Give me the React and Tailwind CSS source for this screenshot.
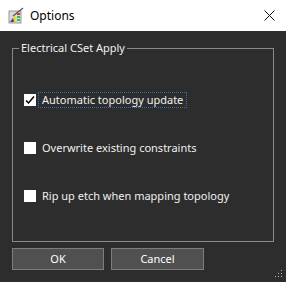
import React from "react";

function AppIcon() {
  return (
    <svg width="17" height="17" viewBox="0 0 17 17">
      <rect x="1" y="4" width="12" height="12" fill="#d8d8d8" stroke="#9a9a9a" />
      <polygon points="2,15 7,8 8,15" fill="#f2d21b" />
      <polygon points="2,15 5,11 6,15" fill="#2c3fbf" />
      <rect x="9" y="6" width="3" height="2" fill="#e23a2a" />
      <rect x="9" y="9" width="3" height="2" fill="#34c23a" />
      <rect x="9" y="12" width="3" height="2" fill="#34c23a" />
      <line x1="5" y1="9" x2="15" y2="1" stroke="#555" strokeWidth="1.3" />
    </svg>
  );
}

function Check({ checked, label, focused }) {
  return (
    <div className="flex items-center h-[16px]">
      <div className="w-[12px] h-[12px] bg-white flex items-center justify-center">
        {checked && (
          <svg width="12" height="12" viewBox="0 0 12 12">
            <path d="M2 6.5 L4.5 9 L10 2.5" fill="none" stroke="#000" strokeWidth="1.5" />
          </svg>
        )}
      </div>
      <div
        className={
          focused
            ? "ml-[2px] px-[3px] h-[16px] flex items-center border border-dotted border-[#2f6fb3]"
            : "ml-[6px] h-[16px] flex items-center"
        }
      >
        {label}
      </div>
    </div>
  );
}

export default function App() {
  return (
    <div
      className="w-[286px] h-[282px] bg-[#2d2d2d] text-[#f0f0f0] text-[11px] flex flex-col relative"
      style={{ fontFamily: '"Noto Sans", "Open Sans", sans-serif' }}
    >
      {/* Title bar */}
      <div className="h-[31px] bg-white text-black flex items-center pl-[8px] pr-[11px]">
        <AppIcon />
        <span className="ml-[5px] text-[12px]">Options</span>
        <div className="flex-1" />
        <svg width="11" height="11" viewBox="0 0 11 11">
          <path d="M0.5 0.5 L10.5 10.5 M10.5 0.5 L0.5 10.5" stroke="#111" strokeWidth="1" />
        </svg>
      </div>

      {/* Group box */}
      <div className="mt-[17px] mx-[12px] w-[262px] h-[194px] border border-[#8a8a8a] relative pl-[11px] pt-[43px] flex flex-col gap-[32px]">
        <span className="absolute -top-[9px] left-[6px] px-[2px] bg-[#2d2d2d] leading-[16px]">
          Electrical CSet Apply
        </span>
        <Check checked focused label="Automatic topology update" />
        <Check label="Overwrite existing constraints" />
        <Check label="Rip up etch when mapping topology" />
      </div>

      {/* Buttons */}
      <div className="flex gap-[7px] ml-[12px] mt-[6px]">
        <button className="w-[92px] h-[22px] bg-[#505050] border border-[#7d7d7d] text-white text-[11px]">
          OK
        </button>
        <button className="w-[93px] h-[22px] bg-[#505050] border border-[#7d7d7d] text-white text-[11px]">
          Cancel
        </button>
      </div>

      {/* Resize grip */}
      <svg className="absolute right-[3px] bottom-[4px]" width="9" height="9" viewBox="0 0 9 9">
        <rect x="7" y="1" width="1" height="1" fill="#bbb" />
        <rect x="4" y="4" width="1" height="1" fill="#bbb" />
        <rect x="7" y="4" width="1" height="1" fill="#bbb" />
        <rect x="1" y="7" width="1" height="1" fill="#bbb" />
        <rect x="4" y="7" width="1" height="1" fill="#bbb" />
        <rect x="7" y="7" width="1" height="1" fill="#bbb" />
      </svg>
    </div>
  );
}
